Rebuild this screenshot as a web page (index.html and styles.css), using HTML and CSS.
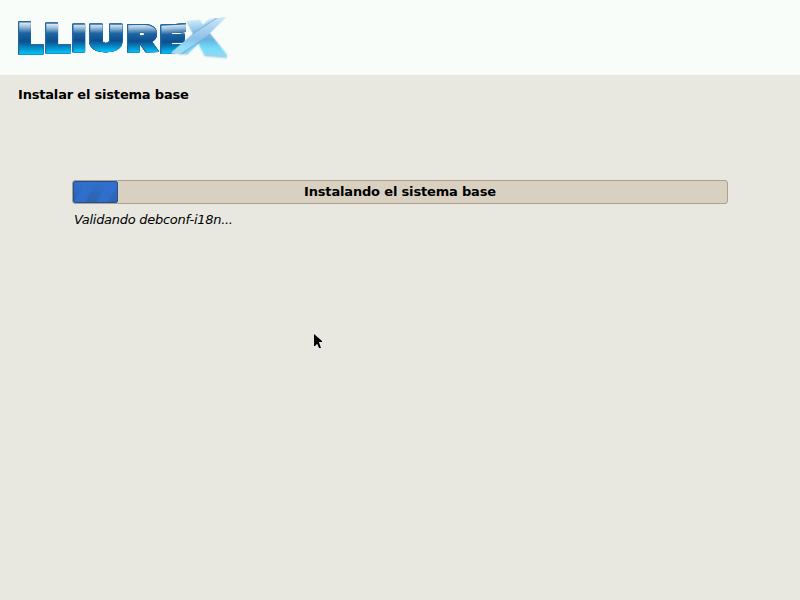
FILE: index.html
```html
<!DOCTYPE html>
<html lang="es">
<head>
<meta charset="utf-8">
<title>Instalar el sistema base</title>
<link rel="stylesheet" href="styles.css">
</head>
<body>
<header class="banner">
  <svg class="logo" width="240" height="75" viewBox="0 0 240 75">
    <defs>
      <linearGradient id="blue" gradientUnits="userSpaceOnUse" x1="0" y1="-31" x2="0" y2="1">
        <stop offset="0" stop-color="#e4eef5"/>
        <stop offset=".14" stop-color="#9dbfd9"/>
        <stop offset=".34" stop-color="#1c64a4"/>
        <stop offset=".6" stop-color="#0d4f8c"/>
        <stop offset=".76" stop-color="#087bb8"/>
        <stop offset="1" stop-color="#00c4f8"/>
      </linearGradient>
    </defs>
    <g class="letters">
      <text transform="translate(18.800 53) scale(1.08 .99)">L</text>
      <text transform="translate(45.800 52) scale(1.1 .91)">L</text>
      <text transform="translate(73 50.800) scale(1.08 .86)">I</text>
      <text transform="translate(89.700 50.800) scale(1.15 .86)">U</text>
      <text class="open" transform="translate(127.300 51.800) skewY(-1) scale(1.13 .88)">R</text>
      <text class="open" transform="translate(160.500 53) skewY(-3) scale(1.07 .9)">E</text>
    </g>
  </svg>
  <span class="ribbon">X</span>
</header>
<main class="page">
  <h1 class="title">Instalar el sistema base</h1>
  <section class="task">
    <div class="progress">
      <div class="fill"></div>
      <span class="label">Instalando el sistema base</span>
    </div>
    <p class="status">Validando debconf-i18n...</p>
  </section>
</main>
<svg class="pointer" width="11" height="18" viewBox="0 0 11 18" aria-hidden="true">
  <path d="M1 1V13H2L4.200 10.800L6 15H8L6.200 10V9H9V8Z"/>
</svg>
</body>
</html>
```
FILE: styles.css
```css
body {
  margin: 0;
  height: 600px;
  overflow: hidden;
  background: #e8e8e0;
  color: #000;
  font: 13px/16px "DejaVu Sans", sans-serif;
}
.banner { position: relative; height: 75px; background: #f8fdf9; }
.logo { display: block; }
.letters {
  filter: drop-shadow(.5px 0 0 #2467a2) drop-shadow(-.5px 0 0 #2467a2)
    drop-shadow(0 .5px 0 #2467a2) drop-shadow(0 -.5px 0 #2467a2);
}
.letters text {
  font: 900 40px Inter, sans-serif;
  fill: url(#blue);
  stroke: url(#blue);
  stroke-width: 2.8px;
}
.letters .open { stroke-width: 2px; }
/* The final letter is stretched in perspective, wider at its foot. */
.ribbon {
  position: absolute;
  left: 0;
  top: 0;
  width: 38px;
  height: 38px;
  font: 900 49px/38px Inter, sans-serif;
  color: transparent;
  -webkit-text-stroke: 2.4px transparent;
  background:
    linear-gradient(135deg, transparent 38%, #6fa8d8 39% 40%, rgba(200, 228, 248, .35) 41% 58%, #74b0dc 59% 60%, transparent 61%),
    linear-gradient(#d0ecfa, #94c6ea 35%, #6ab0e0 62%, #72def8 82%, #a4d2ea);
  -webkit-background-clip: text;
  background-clip: text;
  transform-origin: 0 0;
  transform: matrix3d(.01595, -.18684, 0, -.0047987, -1.49342, .52303, 0, -.0065789, 0, 0, 1, 0, 185, 21, 0, 1);
}
.page { padding: 12px 72px 0; }
.title { margin: 0 0 0 -54px; font-size: 13px; line-height: 16px; letter-spacing: -.19px; }
.task { margin-top: 77px; }
.progress {
  display: grid;
  height: 22px;
  border: 1px solid #aea28f;
  border-radius: 3px;
  background: #d8d0c0;
}
.progress > * { grid-area: 1 / 1; }
.fill {
  box-sizing: border-box;
  width: 45px;
  height: 22px;
  border: 1px solid #23508e;
  border-radius: 2px;
  background:
    linear-gradient(#2f70cc, transparent),
    repeating-linear-gradient(118deg, #2e62ae 0 9px, #2f6fca 10px 19px, #2e62ae 20px);
}
.label { text-align: center; font-weight: bold; line-height: 22px; letter-spacing: -.17px; }
.status { margin: 8px 0 0 2px; font-style: italic; letter-spacing: -.28px; }
.pointer {
  position: absolute;
  left: 313px;
  top: 333px;
  fill: #000;
}
```
